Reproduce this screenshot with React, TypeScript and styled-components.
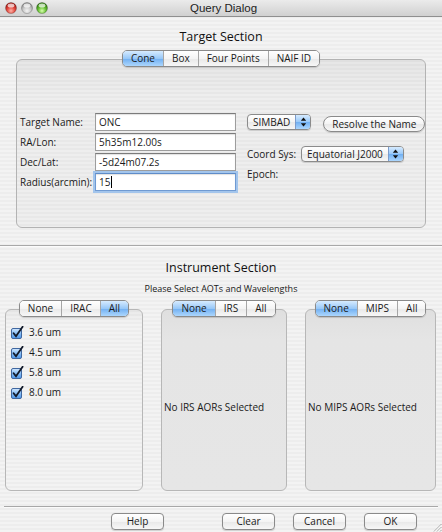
import React from "react";
import styled, { createGlobalStyle } from "styled-components";

const GlobalStyle = createGlobalStyle`
  html, body {
    margin: 0;
    padding: 0;
    background: #ececec;
  }

  body {
    font-family: "Open Sans", "Liberation Sans", sans-serif;
    font-size: 10px;
    color: #1a1a1a;
  }

  * {
    box-sizing: border-box;
  }
`;

const pinstripe =
  "repeating-linear-gradient(180deg, #ededed 0px, #ededed 2px, #f3f3f3 2px, #f3f3f3 4px)";
const pinstripeDark =
  "repeating-linear-gradient(180deg, #e8e8e8 0px, #e8e8e8 2px, #eeeeee 2px, #eeeeee 4px)";
const whiteGloss = "linear-gradient(#ffffff, #f4f4f4 50%, #e8e8e8 51%, #f7f7f7)";
const blueGloss = "linear-gradient(#d6ebff, #98c8f8 50%, #70aff2 51%, #acd6fd)";

const Window = styled.div`
  width: 442px;
  height: 532px;
  display: flex;
  flex-direction: column;
  overflow: hidden;
  background: ${pinstripe};
`;

const TitleBar = styled.div`
  flex: none;
  height: 17px;
  display: grid;
  grid-template-columns: 1fr auto 1fr;
  align-items: center;
  padding-left: 5px;
  background: linear-gradient(#ebebeb, #d0d0d0);
  border-bottom: 1px solid #8f8f8f;
`;

const Lights = styled.div`
  display: flex;
  gap: 3.5px;
`;

const TitleText = styled.div`
  font-family: "Liberation Sans", sans-serif;
  font-size: 11.5px;
  color: #222;
  line-height: 16px;
`;

const SectionTitle = styled.div<{ $top: number }>`
  margin-top: ${(p) => p.$top}px;
  text-align: center;
  font-size: 12.5px;
  line-height: 16px;
  color: #111;
`;

const SubTitle = styled.div`
  margin-top: 6px;
  text-align: center;
  font-size: 9px;
  line-height: 13px;
`;

const SegmentGroup = styled.div<{ $top?: number }>`
  align-self: center;
  margin-top: ${(p) => p.$top ?? 0}px;
  margin-bottom: -8px;
  display: flex;
  border: 1px solid #8a8a8a;
  border-radius: 5px;
  overflow: hidden;
  position: relative;
  z-index: 1;
  box-shadow: 0 1px 1px rgba(0, 0, 0, 0.15);
`;

const Segment = styled.div<{ $active?: boolean }>`
  height: 15px;
  line-height: 15px;
  padding: 0 8px;
  font-size: 10px;
  background: ${(p) => (p.$active ? blueGloss : whiteGloss)};

  & + & {
    border-left: 1px solid #a6a6a6;
  }
`;

const TargetPanel = styled.div`
  margin: 0 16px;
  height: 171px;
  border: 1px solid #b3b3b3;
  border-radius: 6px;
  background: linear-gradient(rgba(0, 0, 0, 0.035), rgba(0, 0, 0, 0) 36px),
    ${pinstripeDark};
  padding: 53px 3px 0;
  display: flex;
  gap: 11px;
`;

const FieldGrid = styled.div`
  display: grid;
  grid-template-columns: 75px 141px;
  grid-auto-rows: 18px;
  row-gap: 2px;
  align-items: center;
`;

const Label = styled.span`
  font-size: 10px;
  white-space: nowrap;
`;

const Field = styled.div<{ $focused?: boolean }>`
  height: 18px;
  display: flex;
  align-items: center;
  padding-left: 3px;
  font-size: 10px;
  background: #fff;
  border: 1px solid ${(p) => (p.$focused ? "#6f9ad2" : "#9d9d9d")};
  border-top-color: ${(p) => (p.$focused ? "#5f8cc8" : "#7b7b7b")};
  box-shadow: inset 0 1px 1px rgba(0, 0, 0, 0.12)
    ${(p) => (p.$focused ? ", 0 0 0 2px #a3c5ec" : "")};
`;

const Caret = styled.span`
  width: 1px;
  height: 12px;
  margin-left: 1px;
  background: #000;
`;

const SideColumn = styled.div`
  display: flex;
  flex-direction: column;
`;

const SideRow = styled.div<{ $top?: number; $gap?: number }>`
  height: 18px;
  margin-top: ${(p) => p.$top ?? 0}px;
  display: flex;
  align-items: center;
  gap: ${(p) => p.$gap ?? 0}px;
`;

const Popup = styled.div`
  height: 16px;
  display: flex;
  border: 1px solid #8b8b8b;
  border-radius: 4px;
  overflow: hidden;
  background: ${whiteGloss};
  box-shadow: 0 1px 1px rgba(0, 0, 0, 0.15);
`;

const PopupText = styled.span`
  padding: 0 5px 0 5px;
  line-height: 14px;
  font-size: 10px;
  white-space: nowrap;
`;

const PopupArrows = styled.span`
  width: 15px;
  display: flex;
  align-items: center;
  justify-content: center;
  background: ${blueGloss};
  border-left: 1px solid #7c9ccc;
`;

const PillButton = styled.div`
  height: 16px;
  margin-top: 4px;
  padding: 0 8px;
  line-height: 14px;
  font-size: 10px;
  white-space: nowrap;
  border: 1px solid #8a8a8a;
  border-radius: 8px;
  background: ${whiteGloss};
  box-shadow: 0 1px 1px rgba(0, 0, 0, 0.15);
`;

const Groove = styled.div<{ $top: number; $inset?: number }>`
  flex: none;
  height: 2px;
  margin: ${(p) => p.$top}px ${(p) => p.$inset ?? 0}px 0;
  border-top: 1px solid #a8a8a8;
  border-bottom: 1px solid #fbfbfb;
`;

const InstrumentRow = styled.div`
  margin-top: 5px;
  padding: 0 5px;
  display: grid;
  grid-template-columns: 138px 126px 131px;
  column-gap: 18px;
`;

const InstrumentColumn = styled.div`
  display: flex;
  flex-direction: column;
`;

const InstrumentPanel = styled.div<{ $empty?: boolean }>`
  height: 182px;
  border: 1px solid #b7b7b7;
  border-radius: 6px;
  display: flex;
  flex-direction: column;
  background: ${(p) =>
    p.$empty
      ? "linear-gradient(#dfdfdf, #e5e5e5 30px, #e6e6e6)"
      : `linear-gradient(rgba(0,0,0,0.04), rgba(0,0,0,0) 14px), ${pinstripe}`};
`;

const CheckList = styled.div`
  padding: 12px 0 0 5px;
  display: flex;
  flex-direction: column;
`;

const CheckRow = styled.div`
  height: 20px;
  display: flex;
  align-items: center;
  gap: 5px;
  font-size: 10px;
`;

const EmptyNote = styled.div`
  flex: 1;
  display: flex;
  align-items: center;
  padding: 14px 0 0 2px;
  font-size: 10px;
  white-space: nowrap;
`;

const ButtonBar = styled.div`
  margin-top: 5px;
  display: flex;
  justify-content: flex-end;
  align-items: flex-start;
  gap: 18px;
  height: 19px;
`;

const PushButton = styled.div<{ $spaced?: boolean }>`
  width: 53px;
  height: 17px;
  margin-right: ${(p) => (p.$spaced ? 40 : 0)}px;
  text-align: center;
  line-height: 15px;
  font-size: 10px;
  border: 1px solid #8a8a8a;
  border-radius: 4px;
  background: ${whiteGloss};
  box-shadow: 0 1px 1px rgba(0, 0, 0, 0.15);
`;

const Grip = styled.div`
  align-self: flex-end;
  margin-left: -3px;
  width: 10px;
  height: 10px;
  display: flex;
`;

const Light = ({ color }: { color: "red" | "gray" | "green" }) => {
  const stops = {
    red: ["#ffb3a8", "#e2483e", "#a3140e"],
    gray: ["#f3f3f3", "#cacaca", "#8f8f8f"],
    green: ["#d9ffb0", "#66c033", "#2d7a0d"],
  }[color];
  const id = `light-${color}`;
  return (
    <svg width="12" height="12" viewBox="0 0 12 12">
      <defs>
        <radialGradient id={id} cx="0.5" cy="0.75" r="0.65">
          <stop offset="0" stopColor={stops[0]} />
          <stop offset="0.55" stopColor={stops[1]} />
          <stop offset="1" stopColor={stops[2]} />
        </radialGradient>
      </defs>
      <circle cx="6" cy="6" r="5.5" fill={`url(#${id})`} stroke="rgba(0,0,0,0.35)" strokeWidth="0.6" />
      <ellipse cx="6" cy="3.4" rx="3.4" ry="2" fill="rgba(255,255,255,0.7)" />
    </svg>
  );
};

const Arrows = () => (
  <svg width="7" height="10" viewBox="0 0 7 10">
    <path d="M3.5 0.5 L6.2 3.8 L0.8 3.8 Z" fill="#111" />
    <path d="M3.5 9.5 L6.2 6.2 L0.8 6.2 Z" fill="#111" />
  </svg>
);

const CheckBox = () => (
  <svg width="13" height="13" viewBox="0 0 13 13">
    <defs>
      <linearGradient id="cbfill" x1="0" y1="0" x2="0" y2="1">
        <stop offset="0" stopColor="#d2e8ff" />
        <stop offset="0.5" stopColor="#86bcf4" />
        <stop offset="1" stopColor="#4d95e8" />
      </linearGradient>
    </defs>
    <rect x="0.5" y="2.5" width="10" height="10" rx="1.5" fill="url(#cbfill)" stroke="#40679f" />
    <path d="M2.6 7.2 L5 10.2 L11.6 0.8" fill="none" stroke="#121a2a" strokeWidth="1.8" strokeLinecap="round" />
  </svg>
);

type Tab = { name: string; active?: boolean };

const Segments = ({ tabs, top }: { tabs: Tab[]; top?: number }) => (
  <SegmentGroup $top={top}>
    {tabs.map((t) => (
      <Segment key={t.name} $active={t.active}>
        {t.name}
      </Segment>
    ))}
  </SegmentGroup>
);

const fields = [
  { label: "Target Name:", value: "ONC" },
  { label: "RA/Lon:", value: "5h35m12.00s" },
  { label: "Dec/Lat:", value: "-5d24m07.2s" },
  { label: "Radius(arcmin):", value: "15", focused: true },
];

const wavelengths = ["3.6 um", "4.5 um", "5.8 um", "8.0 um"];

export default function App() {
  return (
    <>
      <GlobalStyle />
      <Window>
        <TitleBar>
          <Lights>
            <Light color="red" />
            <Light color="gray" />
            <Light color="green" />
          </Lights>
          <TitleText>Query Dialog</TitleText>
        </TitleBar>

        <SectionTitle $top={12}>Target Section</SectionTitle>
        <Segments
          top={5}
          tabs={[
            { name: "Cone", active: true },
            { name: "Box" },
            { name: "Four Points" },
            { name: "NAIF ID" },
          ]}
        />
        <TargetPanel>
          <FieldGrid>
            {fields.map((f) => (
              <React.Fragment key={f.label}>
                <Label>{f.label}</Label>
                <Field $focused={f.focused}>
                  {f.value}
                  {f.focused && <Caret />}
                </Field>
              </React.Fragment>
            ))}
          </FieldGrid>
          <SideColumn>
            <SideRow $gap={12}>
              <Popup>
                <PopupText>SIMBAD</PopupText>
                <PopupArrows>
                  <Arrows />
                </PopupArrows>
              </Popup>
              <PillButton>Resolve the Name</PillButton>
            </SideRow>
            <SideRow $top={14} $gap={5}>
              <Label>Coord Sys:</Label>
              <Popup>
                <PopupText>Equatorial J2000</PopupText>
                <PopupArrows>
                  <Arrows />
                </PopupArrows>
              </Popup>
            </SideRow>
            <SideRow $top={2}>
              <Label>Epoch:</Label>
            </SideRow>
          </SideColumn>
        </TargetPanel>

        <Groove $top={17} />

        <SectionTitle $top={13}>Instrument Section</SectionTitle>
        <SubTitle>Please Select AOTs and Wavelengths</SubTitle>

        <InstrumentRow>
          <InstrumentColumn>
            <Segments tabs={[{ name: "None" }, { name: "IRAC" }, { name: "All", active: true }]} />
            <InstrumentPanel>
              <CheckList>
                {wavelengths.map((w) => (
                  <CheckRow key={w}>
                    <CheckBox />
                    {w}
                  </CheckRow>
                ))}
              </CheckList>
            </InstrumentPanel>
          </InstrumentColumn>
          <InstrumentColumn>
            <Segments tabs={[{ name: "None", active: true }, { name: "IRS" }, { name: "All" }]} />
            <InstrumentPanel $empty>
              <EmptyNote>No IRS AORs Selected</EmptyNote>
            </InstrumentPanel>
          </InstrumentColumn>
          <InstrumentColumn>
            <Segments tabs={[{ name: "None", active: true }, { name: "MIPS" }, { name: "All" }]} />
            <InstrumentPanel $empty>
              <EmptyNote>No MIPS AORs Selected</EmptyNote>
            </InstrumentPanel>
          </InstrumentColumn>
        </InstrumentRow>

        <Groove $top={15} $inset={4} />

        <ButtonBar>
          <PushButton $spaced>Help</PushButton>
          <PushButton>Clear</PushButton>
          <PushButton>Cancel</PushButton>
          <PushButton>OK</PushButton>
          <Grip>
            <svg width="10" height="10" viewBox="0 0 10 10">
              <path d="M9.5 2 L2 9.5 M9.5 5 L5 9.5 M9.5 8 L8 9.5" stroke="#8a8a8a" strokeWidth="0.8" />
              <path d="M9.5 3 L3 9.5 M9.5 6 L6 9.5" stroke="#fff" strokeWidth="0.8" />
            </svg>
          </Grip>
        </ButtonBar>
      </Window>
    </>
  );
}
